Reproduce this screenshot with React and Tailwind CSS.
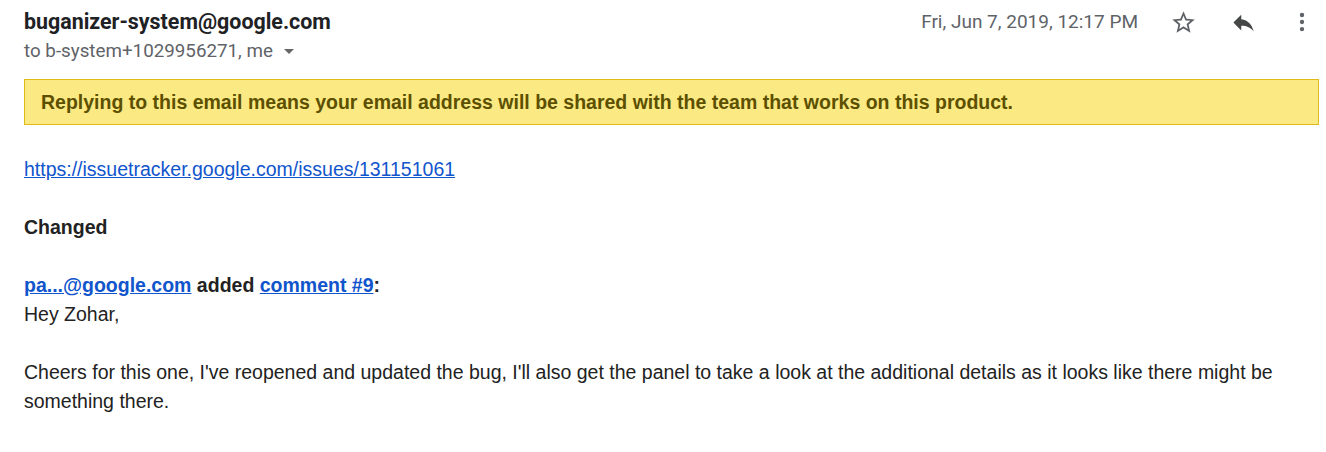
import React from 'react'

const StarIcon = () => (
    <svg width="27" height="27" viewBox="0 0 24 24" fill="#5f6368">
        <path d="M22 9.24l-7.19-.62L12 2 9.19 8.63 2 9.24l5.46 4.73L5.82 21 12 17.27 18.18 21l-1.63-7.03L22 9.24zM12 15.4l-3.76 2.27 1-4.28-3.32-2.88 4.38-.38L12 6.1l1.71 4.04 4.38.38-3.32 2.88 1 4.28L12 15.4z" />
    </svg>
)

const ReplyIcon = () => (
    <svg width="27" height="27" viewBox="0 0 24 24" fill="#444746">
        <path d="M10 9V5l-7 7 7 7v-4.1c5 0 8.5 1.6 11 5.1-1-5-4-10-11-11z" />
    </svg>
)

const MoreIcon = () => (
    <svg width="26" height="26" viewBox="0 0 24 24" fill="#5f6368">
        <circle cx="12" cy="5.5" r="2" />
        <circle cx="12" cy="12" r="2" />
        <circle cx="12" cy="18.5" r="2" />
    </svg>
)

const App = () => {
    return (
        <div className="w-[1326px] h-[452px] bg-white overflow-hidden">
            <div className="flex items-start pl-6 pr-[11px] pt-[7px]">
                <div className="flex-1 font-['Roboto',sans-serif]">
                    <div className="text-[21.4px] leading-[30px] font-bold text-[#202124]">buganizer-system@google.com</div>
                    <div className="flex items-center text-[18.8px] leading-[28px] text-[#5f6368]">
                        to b-system+1029956271, me
                        <span className="ml-[11px] w-0 h-0 border-l-[5px] border-r-[5px] border-t-[5px] border-l-transparent border-r-transparent border-t-[#666]"></span>
                    </div>
                </div>
                <div className="flex items-center font-['Roboto',sans-serif] text-[19px] leading-[30px] text-[#5f6368]">
                    <span className="mr-[32px]">Fri, Jun 7, 2019, 12:17 PM</span>
                    <div className="w-[27px] mr-[33px] flex justify-center"><StarIcon /></div>
                    <div className="w-[27px] mr-[32px] flex justify-center"><ReplyIcon /></div>
                    <div className="w-[26px] flex justify-center"><MoreIcon /></div>
                </div>
            </div>

            <div className="pl-6 pr-2 font-['Liberation_Sans',Arial,sans-serif] text-[19.5px] leading-[29px] text-[#222]">
                <div className="mt-[14px] w-[1295px] bg-[#fbe983] border border-[#e0bb16] px-4 py-[7.5px] font-bold text-[#5c5000]">
                    Replying to this email means your email address will be shared with the team that works on this product.
                </div>

                <div className="mt-[29.5px]">
                    <a href="#" className="text-[#1155cc] underline">https://issuetracker.google.com/issues/131151061</a>
                </div>
                <div className="mt-[29px] font-bold">Changed</div>
                <div className="mt-[29px]">
                    <a href="#" className="text-[#1155cc] underline font-bold">pa...@google.com</a>
                    <b> added </b>
                    <a href="#" className="text-[#1155cc] underline font-bold">comment #9</a>
                    <b>:</b>
                </div>
                <div>Hey Zohar,</div>
                <div className="mt-[29px] w-[1290px]">
                    Cheers for this one, I've reopened and updated the bug, I'll also get the panel to take a look at the additional details as it looks like there might be something there.
                </div>
            </div>
        </div>
    )
}

export default App
